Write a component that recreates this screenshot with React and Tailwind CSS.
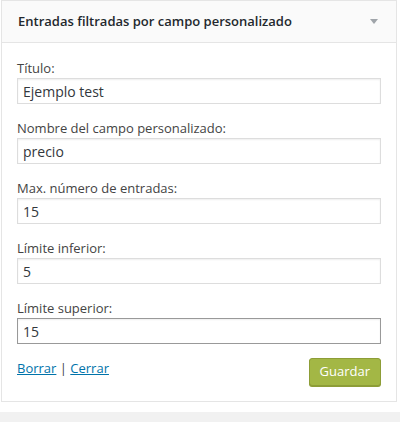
import React, { useState } from 'react';

const fields = [
  { id: 'title', label: 'Título:', value: 'Ejemplo test' },
  { id: 'field', label: 'Nombre del campo personalizado:', value: 'precio' },
  { id: 'max', label: 'Max. número de entradas:', value: '15' },
  { id: 'min', label: 'Límite inferior:', value: '5' },
  { id: 'top', label: 'Límite superior:', value: '15', focused: true },
];

const App = () => {
  const [values, setValues] = useState(
    Object.fromEntries(fields.map((f) => [f.id, f.value]))
  );

  return (
    <div
      className="h-[422px] bg-white flex flex-col"
      style={{ fontFamily: '"Open Sans", "Noto Sans", sans-serif' }}
    >
      {/* Widget */}
      <div className="ml-px w-[396px] border border-[#e5e5e5] bg-white">
        <div className="h-[42px] bg-[#fafafa] border-b border-[#e5e5e5] flex items-center justify-between pl-[16px] pr-[18px]">
          <h3 className="text-[13px] font-semibold text-[#23282d]">
            Entradas filtradas por campo personalizado
          </h3>
          <svg width="8" height="5" viewBox="0 0 8 5">
            <path d="M0 0 H8 L4 5 Z" fill="#a0a5aa" />
          </svg>
        </div>

        <div className="px-[15px] pt-[16px] pb-[15px]">
          <div className="flex flex-col gap-[15px]">
            {fields.map((f) => (
              <div key={f.id} className="flex flex-col">
                <label htmlFor={f.id} className="text-[13px] leading-[18px] mb-px text-[#444]">
                  {f.label}
                </label>
                <input
                  id={f.id}
                  type="text"
                  value={values[f.id]}
                  onChange={(e) => setValues({ ...values, [f.id]: e.target.value })}
                  className={`h-[26px] w-full px-[5px] text-[14px] text-[#32373c] bg-white outline-none border ${
                    f.focused ? 'border-[#999]' : 'border-[#ddd]'
                  } shadow-[inset_0_1px_2px_rgba(0,0,0,0.07)]`}
                />
              </div>
            ))}
          </div>

          <div className="flex justify-between items-start mt-[14px]">
            <div className="text-[13px] text-[#444] pt-[1px]">
              <a href="#" className="text-[#0073aa] underline">Borrar</a>
              {' | '}
              <a href="#" className="text-[#0073aa] underline">Cerrar</a>
            </div>
            <button className="h-[28px] px-[10px] rounded-[3px] bg-[#a3b745] border border-[#8d9d37] text-white text-[13px] shadow-[0_1px_0_#8d9d37]">
              Guardar
            </button>
          </div>
        </div>
      </div>

      <div className="h-[10px]" />
      <div className="flex-1 bg-[#f1f1f1]" />
    </div>
  );
};

export default App;
